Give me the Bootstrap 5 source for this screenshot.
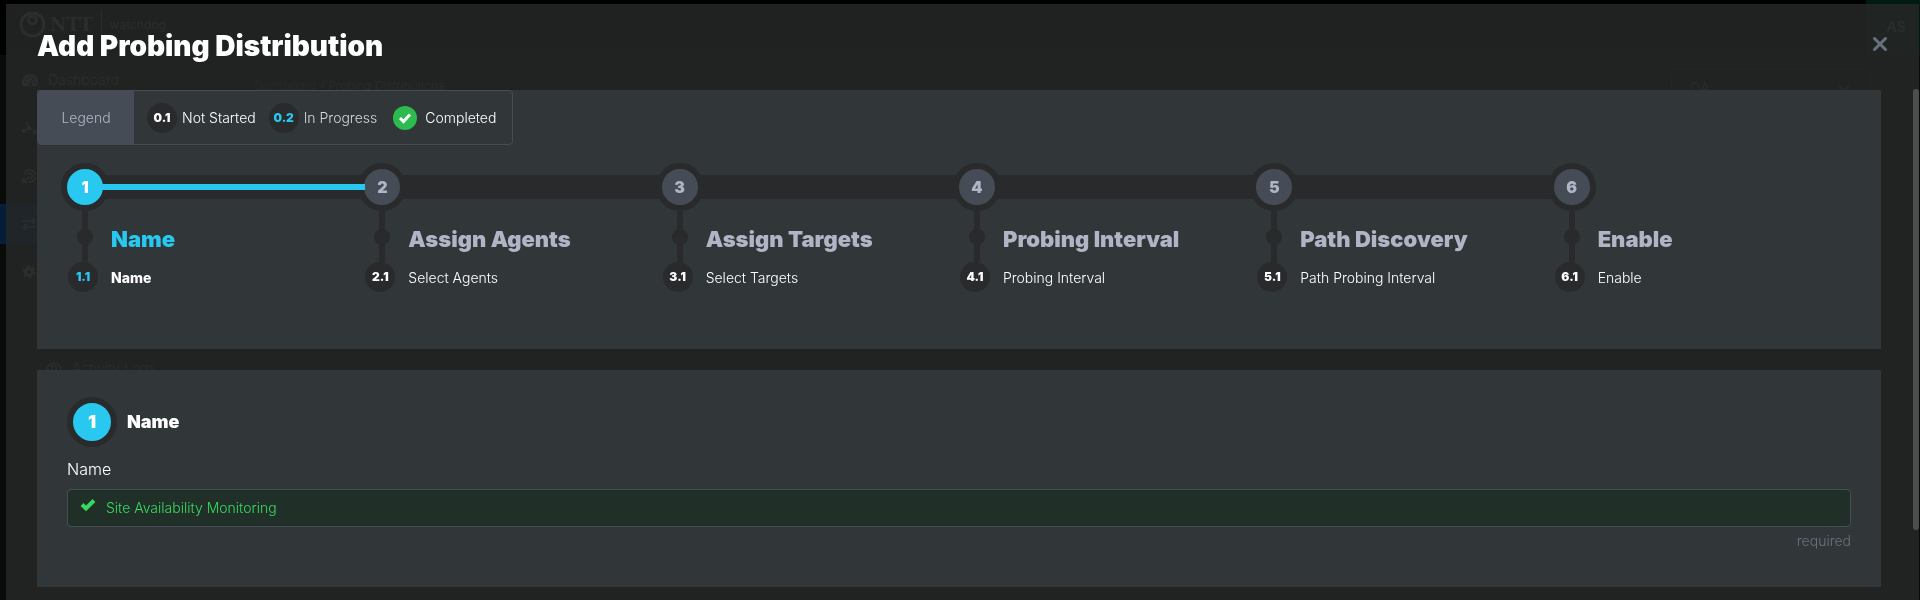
<!DOCTYPE html>
<html lang="en" data-bs-theme="dark">
<head>
<meta charset="utf-8">
<meta name="viewport" content="width=device-width, initial-scale=1">
<title>Add Probing Distribution</title>
<link href="https://cdn.jsdelivr.net/npm/bootstrap@5.3.0/dist/css/bootstrap.min.css" rel="stylesheet">
<style>
  :root { --panel: #313639; --track: #292a2c; --slate: #454c56; --cyan: #28c8f0; --mute: #b0b5c5; --ghost: #525554; }
  body { font-family: Inter, "Liberation Sans", sans-serif; font-size: 14px; font-weight: 300; line-height: 20px; background: #090b0a; color: #fff; min-height: 100vh; overflow: hidden; }

  /* dimmed application behind the dialog */
  .app-shell { color: var(--ghost); min-height: 100vh; }
  .app-top { background: #000; height: 55px; padding: 0 0 0 19px; }
  .brand { height: 49px; }
  .brand-name { font: 700 18px/24px "DejaVu Serif", serif; }
  .brand-rule { width: 1px; height: 30px; background: var(--ghost); }
  .brand-app { font-size: 12px; font-weight: 400; }
  .user-box { width: 54px; background: #021a14; font-weight: 600; font-size: 14px; padding: 0 0 2px 6px; }
  .app-side { width: 200px; padding-top: 5px; }
  .side-link { height: 40px; padding-left: 22px; margin-bottom: 8px; color: inherit; text-decoration: none; gap: 10px; }
  .side-link.current { background: #061d38; }
  .side-sub { padding-left: 46px; height: 20px; gap: 10px; margin-top: 66px; }
  .crumbs { padding: 21px 0 0 54px; font-style: italic; font-size: 12px; gap: 4px; }
  .crumbs a { color: #164558; text-decoration: none; }
  .env-box { width: 200px; height: 38px; margin: 14px 49px 0 auto; padding: 0 20px 0 18px; border: 1px solid #1c1e1d; border-radius: 4px; }

  /* dialog */
  .sheet { position: fixed; inset: 4px 1px 0 6px; background: rgba(37, 39, 38, .86); padding: 0 38px 0 31px; }
  .sheet-title { font-size: 28px; line-height: 36px; font-weight: 900; margin: 24px 0 26px; }
  .close-x { position: absolute; top: 31px; right: 30px; width: 18px; height: 18px; padding: 0; border: 0; background: none; color: #68727e; display: flex; }
  .scroll-thumb { position: absolute; top: 85px; right: 0; width: 6px; height: 441px; border-radius: 3px; background: #4c4e4d; }
  .panel-box { background: var(--panel); }

  .legend-bar { border: 1px solid var(--slate); border-radius: 4px; height: 55px; width: fit-content; overflow: hidden; padding-right: 16px; }
  .legend-tag { background: var(--slate); color: var(--mute); width: 96px; }
  .legend-item { gap: 5px; margin-left: 13px; }
  .legend-item.done { gap: 8px; margin-left: 16px; }
  .legend-item .soft { color: #d4d7da; }
  .sub-dot { width: 30px; height: 30px; border-radius: 50%; background: var(--track); font-size: 12px; font-weight: 900; display: flex; align-items: center; justify-content: center; flex: none; }
  .done-dot { width: 24px; height: 24px; border-radius: 50%; background: #2dba4e; display: flex; align-items: center; justify-content: center; }

  .steps { padding: 18px 36px 57px 24px; }
  .step { flex: 1 1 0; min-width: 0; }
  .step-rail { height: 48px; display: flex; align-items: center; }
  .num-dot { width: 48px; height: 48px; border-radius: 50%; border: 6px solid var(--track); background: var(--slate); color: var(--mute); font-size: 16px; font-weight: 900; display: flex; align-items: center; justify-content: center; flex: none; }
  .num-dot.on { background: var(--cyan); color: #fff; }
  .rail { flex: 1; height: 24px; margin: 0 -4px; background: var(--track); display: flex; align-items: center; }
  .rail.on::before { content: ""; flex: 1; height: 6px; margin: 0 -3px; background: var(--cyan); position: relative; z-index: 1; }
  .stem { width: 48px; height: 51px; display: flex; align-items: center; justify-content: center; background: linear-gradient(var(--track), var(--track)) center / 6px 100% no-repeat; flex: none; }
  .stem::before { content: ""; width: 16px; height: 16px; border-radius: 50%; background: var(--track); }
  .step-name { font-size: 22px; line-height: 28px; font-weight: 900; margin: 14px 0 0 2px; color: var(--mute); }
  .step-sub { gap: 13px; padding-left: 7px; }
  .step-sub a { color: #fff; text-decoration: none; padding-top: 2px; }
  .step-sub a.now { font-weight: 800; }
  .cy, .step .cy { color: var(--cyan); }

  .form-box { margin-top: 21px; padding: 27px 30px 35px; }
  .form-head { gap: 10px; }
  .form-box .num-dot { width: 50px; height: 50px; font-size: 18px; }
  .form-title { font-size: 18px; line-height: 24px; font-weight: 900; margin: 0; }
  .name-label { font-size: 16px; line-height: 24px; margin: 10px 0 8px; }
  .name-wrap .form-control { height: 38px; background: #203028; border: 1px solid #465054; border-radius: 4px; color: #38d860; font-size: 14px; font-weight: 300; padding: 5px 12px 7px 38px; }
  .name-wrap svg { position: absolute; left: 13px; top: 9px; }
  .hint { color: #68727e; line-height: 20px; margin-top: 4px; padding-bottom: 1px; text-align: right; }
</style>
</head>
<body>

<div class="app-shell d-flex flex-column" aria-hidden="true">
  <header class="app-top d-flex align-items-start">
    <div class="brand d-flex align-items-center">
      <svg width="27" height="27" viewBox="0 0 27 27" fill="none" stroke="currentColor" stroke-width="3"><path d="M9.500 3C5 4.500 2 8.500 2 13.500a11.500 11.500 0 0 0 23 0C25 8.500 22 4.500 17.500 3"/><path d="M8 2.500c2.500 0 4-.5 5.500.3 1.500-.8 3-.3 5.500-.3"/><circle cx="13.500" cy="9" r="4"/></svg>
      <span class="brand-name ms-1">NTT</span>
      <span class="brand-rule mx-2"></span>
      <span class="brand-app">watchdog</span>
    </div>
    <span class="user-box ms-auto align-self-stretch d-flex align-items-center justify-content-center">AS</span>
  </header>
  <div class="d-flex flex-fill">
    <nav class="app-side">
      <a class="side-link d-flex align-items-center" href="#"><svg width="16" height="14" viewBox="0 0 16 14" fill="currentColor"><path d="M8 1a8 8 0 0 0-7 12h14A8 8 0 0 0 8 1zm0 2a1 1 0 1 1 0 2 1 1 0 0 1 0-2zM3 8a1 1 0 1 1 0 2 1 1 0 0 1 0-2zm1.500-3.500a1 1 0 1 1 0 2 1 1 0 0 1 0-2zM12 5l-2.500 5a1.600 1.600 0 1 1-1-.5L11 4.500zm1 3a1 1 0 1 1 0 2 1 1 0 0 1 0-2z" fill-rule="evenodd"/></svg>Dashboard</a>
      <a class="side-link d-flex align-items-center" href="#" aria-label="Agents"><svg width="16" height="14" viewBox="0 0 16 14" fill="currentColor" stroke="currentColor"><path d="M2 10l5-3 6 4M7 7L5 2" fill="none"/><circle cx="2" cy="10" r="1.500"/><circle cx="7" cy="7" r="2"/><circle cx="13" cy="11" r="1.500"/><circle cx="5" cy="2" r="1"/></svg></a>
      <a class="side-link d-flex align-items-center" href="#" aria-label="Targets"><svg width="14" height="14" viewBox="0 0 14 14" fill="none" stroke="currentColor" stroke-width="1.500"><path d="M2 5a6 6 0 1 1 5 8M4.500 6A3 3 0 1 1 8 10M8 7l-7 6M1 9v4h4"/></svg></a>
      <a class="side-link current d-flex align-items-center" href="#" aria-label="Distributions"><svg width="14" height="12" viewBox="0 0 14 12" fill="none" stroke="currentColor" stroke-width="1.500"><path d="M0 3h13M10 0l3 3-3 3M14 9H1M4 6L1 9l3 3"/></svg></a>
      <a class="side-link d-flex align-items-center" href="#" aria-label="Settings"><svg width="14" height="14" viewBox="0 0 14 14" fill="none" stroke="currentColor"><circle cx="7" cy="7" r="3.500" stroke-width="3"/><circle cx="7" cy="7" r="5.800" stroke-width="2" stroke-dasharray="3 3.070"/></svg></a>
      <a class="side-link side-sub d-flex align-items-center" href="#"><svg width="16" height="12" viewBox="0 0 16 12" fill="none" stroke="currentColor" stroke-width="1.500"><path d="M1 6c3-6.500 11-6.500 14 0-3 6.500-11 6.500-14 0z"/><circle cx="8" cy="6" r="2.500"/></svg>Activity Logs</a>
    </nav>
    <div class="crumbs d-flex"><a href="#">Dashboard</a><span>/</span><span>Probing Distributions</span></div>
    <div class="env-box d-flex align-items-center justify-content-between"><span>QA</span><svg width="12" height="7" viewBox="0 0 12 7" fill="none" stroke="#164558" stroke-width="2"><path d="M1 1l5 5 5-5"/></svg></div>
  </div>
</div>

<div class="sheet" role="dialog" aria-labelledby="dlg-title">
  <h1 class="sheet-title" id="dlg-title">Add Probing Distribution</h1>
  <button class="close-x align-items-center justify-content-center" type="button" aria-label="Close"><svg width="16" height="16" viewBox="0 0 16 16" stroke="currentColor" stroke-width="3" stroke-linecap="round"><path d="M2.500 2.500l11 11M13.500 2.500l-11 11"/></svg></button>
  <div class="scroll-thumb"></div>

  <section class="panel-box">
    <div class="legend-bar d-flex align-items-center">
      <div class="legend-tag align-self-stretch d-flex align-items-center justify-content-center">Legend</div>
      <div class="legend-item d-flex align-items-center"><span class="sub-dot">0.1</span><span>Not Started</span></div>
      <div class="legend-item d-flex align-items-center"><span class="sub-dot cy">0.2</span><span class="soft">In Progress</span></div>
      <div class="legend-item done d-flex align-items-center"><span class="done-dot"><svg width="14" height="12" viewBox="0 0 14 12" fill="none" stroke="#fff" stroke-width="3"><path d="M2 6l3.500 3.500L12 2.500"/></svg></span><span>Completed</span></div>
    </div>
    <div class="steps d-flex">
      <div class="step">
        <div class="step-rail"><span class="num-dot on">1</span><span class="rail on"></span></div>
        <div class="d-flex"><span class="stem"></span><h2 class="step-name cy">Name</h2></div>
        <div class="step-sub d-flex align-items-center"><span class="sub-dot cy">1.1</span><a class="now" href="#">Name</a></div>
      </div>
      <div class="step">
        <div class="step-rail"><span class="num-dot">2</span><span class="rail"></span></div>
        <div class="d-flex"><span class="stem"></span><h2 class="step-name">Assign Agents</h2></div>
        <div class="step-sub d-flex align-items-center"><span class="sub-dot">2.1</span><a href="#">Select Agents</a></div>
      </div>
      <div class="step">
        <div class="step-rail"><span class="num-dot">3</span><span class="rail"></span></div>
        <div class="d-flex"><span class="stem"></span><h2 class="step-name">Assign Targets</h2></div>
        <div class="step-sub d-flex align-items-center"><span class="sub-dot">3.1</span><a href="#">Select Targets</a></div>
      </div>
      <div class="step">
        <div class="step-rail"><span class="num-dot">4</span><span class="rail"></span></div>
        <div class="d-flex"><span class="stem"></span><h2 class="step-name">Probing Interval</h2></div>
        <div class="step-sub d-flex align-items-center"><span class="sub-dot">4.1</span><a href="#">Probing Interval</a></div>
      </div>
      <div class="step">
        <div class="step-rail"><span class="num-dot">5</span><span class="rail"></span></div>
        <div class="d-flex"><span class="stem"></span><h2 class="step-name">Path Discovery</h2></div>
        <div class="step-sub d-flex align-items-center"><span class="sub-dot">5.1</span><a href="#">Path Probing Interval</a></div>
      </div>
      <div class="step">
        <div class="step-rail"><span class="num-dot">6</span></div>
        <div class="d-flex"><span class="stem"></span><h2 class="step-name">Enable</h2></div>
        <div class="step-sub d-flex align-items-center"><span class="sub-dot">6.1</span><a href="#">Enable</a></div>
      </div>
    </div>
  </section>

  <section class="panel-box form-box">
    <div class="form-head d-flex align-items-center"><span class="num-dot on">1</span><h2 class="form-title">Name</h2></div>
    <label class="name-label d-block" for="dist-name">Name</label>
    <div class="name-wrap position-relative">
      <input class="form-control" id="dist-name" type="text" value="Site Availability Monitoring">
      <svg width="16" height="14" viewBox="0 0 16 14" fill="none" stroke="#38d860" stroke-width="4"><path d="M2 6.500l4 4L14 2.500"/></svg>
    </div>
    <div class="hint">required</div>
  </section>
</div>

<script src="https://cdn.jsdelivr.net/npm/bootstrap@5.3.0/dist/js/bootstrap.bundle.min.js"></script>
</body>
</html>
